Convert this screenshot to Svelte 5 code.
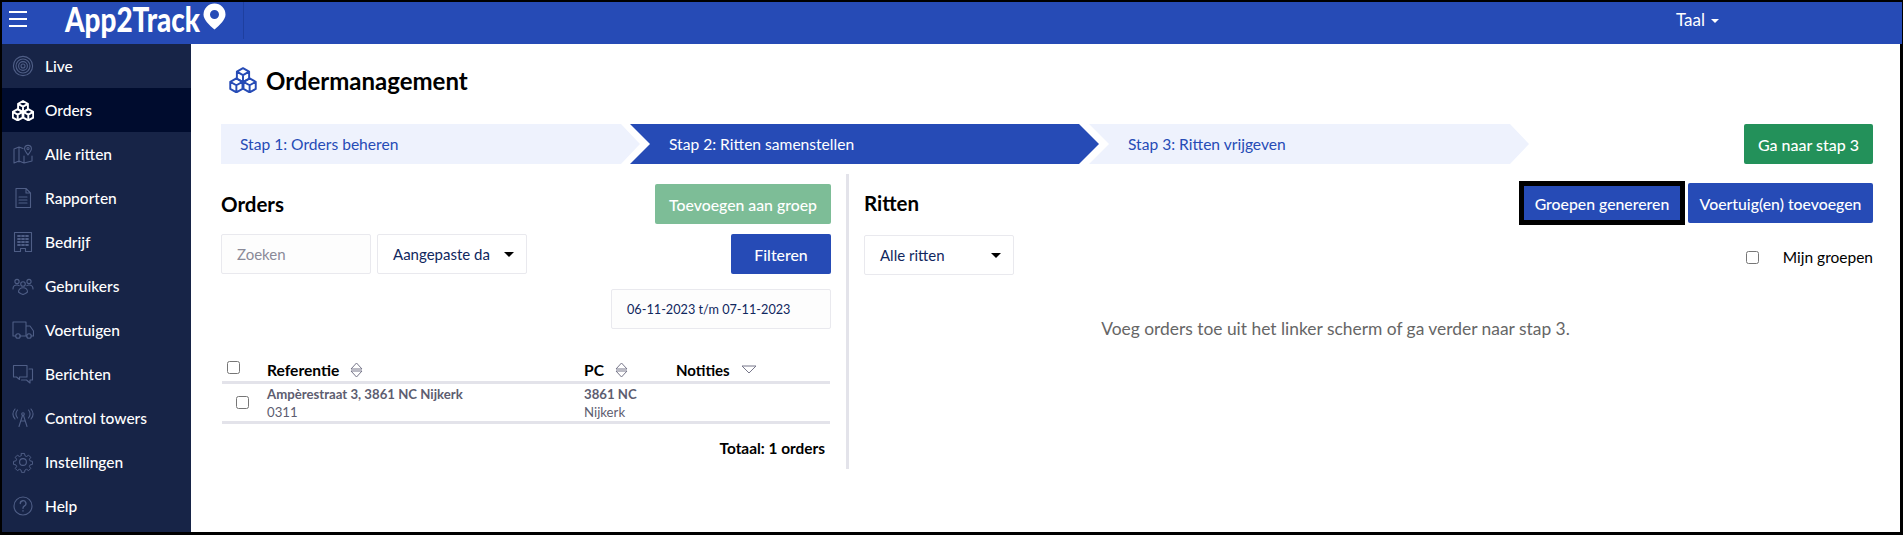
<script>
  const NAV = [
    { label: 'Live', icon: 'live' },
    { label: 'Orders', icon: 'cubes', active: true },
    { label: 'Alle ritten', icon: 'map' },
    { label: 'Rapporten', icon: 'doc' },
    { label: 'Bedrijf', icon: 'building' },
    { label: 'Gebruikers', icon: 'users' },
    { label: 'Voertuigen', icon: 'truck' },
    { label: 'Berichten', icon: 'chat' },
    { label: 'Control towers', icon: 'tower' },
    { label: 'Instellingen', icon: 'gear' },
    { label: 'Help', icon: 'help' },
  ];
</script>

{#snippet cube(x, y)}
  <path d="M{x} {y}l6 -3.4l6 3.4v7l-6 3.4l-6 -3.4zM{x} {y}l6 3.4l6 -3.4M{x + 6} {y + 3.4}v7" />
{/snippet}

{#snippet cubes(width, height, sw, cls)}
  <svg class={cls} {width} {height} viewBox="0.5 0 27 25.500" fill="none" stroke="currentColor" stroke-width={sw} stroke-linejoin="round">
    {@render cube(8, 4.5)}
    {@render cube(1.5, 14.5)}
    {@render cube(14.5, 14.5)}
  </svg>
{/snippet}

{#snippet navIcon(name)}
  {#if name === 'cubes'}
    {@render cubes(22, 21, 2.4, 'nav-icon')}
  {:else}
    <svg class="nav-icon" width="22" height="22" viewBox="0 0 22 22" fill="none" stroke="currentColor" stroke-width="1.1" stroke-linejoin="round" stroke-linecap="round">
      {#if name === 'live'}
        <circle cx="11" cy="11" r="9.6" /><circle cx="11" cy="11" r="7" /><circle cx="11" cy="11" r="4.4" /><circle cx="11" cy="11" r="2" />
      {:else if name === 'map'}
        <path d="M2 6l5-2l4 1.6M7 4v15M2 6v14l5-2l5 2l8-2v-5M12 20v-7" />
        <path d="M16 12c-2-2.6-3.4-4.4-3.4-6.2a3.4 3.4 0 0 1 6.8 0c0 1.8-1.4 3.6-3.4 6.2z" /><circle cx="16" cy="5.6" r="1.1" />
      {:else if name === 'doc'}
        <path d="M4 1.5h10l4.500 4.500v14.500h-14.500zM14 1.500v4.500h4.500M7 10h8M7 13h8M7 16h8" />
      {:else if name === 'building'}
        <path d="M2.500 1.500h17v19h-6v-3h-5v3h-6z" />
        <path d="M6 5h2M10 5h2M14 5h2M6 8h2M10 8h2M14 8h2M6 11h2M10 11h2M14 11h2M6 14h2M10 14h2M14 14h2" stroke-width="1.800" />
      {:else if name === 'users'}
        <circle cx="5" cy="6.500" r="2.100" /><circle cx="17" cy="6.500" r="2.100" /><circle cx="11" cy="9" r="2.300" />
        <path d="M1 14c0-2.500 1.500-4 4-4c1 0 1.600.2 2.200.6M21 14c0-2.500-1.500-4-4-4c-1 0-1.600.2-2.200.6M6.500 17c0-2.600 2-4.300 4.500-4.300s4.500 1.700 4.500 4.300l-2 1.500l-2.500 1l-2.500-1z" />
      {:else if name === 'truck'}
        <path d="M3.500 17h-2.500v-14h13v14h-6.500M14 7h4l3.500 5v5h-2.500M14 17h1" />
        <circle cx="6" cy="17" r="2.300" /><circle cx="17" cy="17" r="2.300" />
      {:else if name === 'chat'}
        <path d="M15 2.500h-13.500v11.500h3l3 2.500v-2.500h7.500z" />
        <path d="M17 6h3.500v11h-2.500v3l-3.500-3h-5" />
      {:else if name === 'tower'}
        <circle cx="11" cy="7" r="1.300" />
        <path d="M10.500 8.500l-3.500 11M11.500 8.500l3.500 11M9 14h4M5.500 3c-2 2.500-2 5.500 0 8M16.500 3c2 2.500 2 5.500 0 8M3 2c-2.500 3-2.500 7 0 10M19 2c2.500 3 2.500 7 0 10" />
      {:else if name === 'gear'}
        <circle cx="11" cy="11" r="3.400" />
        <path d="M9.300 1.500h3.400l.5 2.600l1.800.8l2.200-1.500l2.400 2.400l-1.500 2.200l.8 1.800l2.600.5v3.400l-2.600.5l-.8 1.800l1.500 2.200l-2.400 2.400l-2.200-1.500l-1.800.8l-.5 2.600h-3.400l-.5-2.600l-1.800-.8l-2.200 1.500l-2.400-2.400l1.500-2.200l-.8-1.800l-2.600-.5v-3.400l2.600-.5l.8-1.800l-1.500-2.200l2.400-2.400l2.200 1.500l1.800-.8z" transform="translate(1.100 1.100) scale(.9)" />
      {:else if name === 'help'}
        <circle cx="11" cy="11" r="9" />
        <path d="M8.300 8.500a2.800 2.800 0 1 1 4.200 2.400c-1 .6-1.500 1.200-1.500 2.300M11 15.800v.2" stroke-width="1.400" />
      {/if}
    </svg>
  {/if}
{/snippet}

{#snippet sortIcon()}
  <svg class="sort" width="13" height="16" viewBox="0 0 13 16" fill="none" stroke="#77778a" stroke-width="1">
    <path d="M1 7l5.500-6l5.500 6zM1 9h11l-5.500 6z" />
  </svg>
{/snippet}

<div class="frame">
  <header class="topbar">
    <button class="burger" aria-label="Menu"><span></span><span></span><span></span></button>
    <div class="logo">
      <span class="logo-text">App2Track</span>
      <svg width="23" height="27" viewBox="0 0 23 27"><path fill="#fff" fill-rule="evenodd" d="M11.500 0.500a11 11 0 0 1 11 11c0 5-5.500 10.500-11 15c-5.500-4.500-11-10-11-15a11 11 0 0 1 11-11zM11.500 7a4.500 4.500 0 1 0 0 9a4.500 4.500 0 0 0 0-9z" /></svg>
    </div>
    <div class="taal">Taal <i class="caret-white"></i></div>
  </header>

  <div class="body">
    <nav class="sidebar">
      {#each NAV as item}
        <div class="nav-item" class:active={item.active}>
          <span class="icon-box">{@render navIcon(item.icon)}</span>
          <span>{item.label}</span>
        </div>
      {/each}
    </nav>

    <main class="main">
      <div class="title">
        {@render cubes(28, 26, 1.9, 'title-icon')}
        <h1>Ordermanagement</h1>
      </div>

      <div class="wizard">
        <div class="steps">
          <div class="step first">Stap 1: Orders beheren</div>
          <div class="step second">Stap 2: Ritten samenstellen</div>
          <div class="step third">Stap 3: Ritten vrijgeven</div>
        </div>
        <button class="btn green">Ga naar stap 3</button>
      </div>

      <div class="columns">
        <section class="orders">
          <div class="row-head">
            <h2>Orders</h2>
            <button class="btn light-green">Toevoegen aan groep</button>
          </div>
          <div class="filters">
            <div class="field placeholder">Zoeken</div>
            <div class="field select">Aangepaste da <i class="caret"></i></div>
            <button class="btn blue filter-btn">Filteren</button>
          </div>
          <div class="date-wrap"><div class="field date">06-11-2023 t/m 07-11-2023</div></div>

          <div class="table">
            <div class="tr th">
              <input type="checkbox" class="head-check" />
              <div class="cell-ref">Referentie {@render sortIcon()}</div>
              <div class="cell-pc">PC {@render sortIcon()}</div>
              <div class="cell-notes">
                Notities
                <svg class="sort" width="16" height="9" viewBox="0 0 16 9" fill="none" stroke="#77778a"><path d="M1 1h14l-7 7z" /></svg>
              </div>
            </div>
            <div class="tr td">
              <input type="checkbox" class="row-check" />
              <div class="cell-ref"><b>Ampèrestraat 3, 3861 NC Nijkerk</b><span>0311</span></div>
              <div class="cell-pc"><b>3861 NC</b><span>Nijkerk</span></div>
              <div class="cell-notes"></div>
            </div>
          </div>
          <div class="total">Totaal: 1 orders</div>
        </section>

        <section class="rides">
          <div class="row-head">
            <h2>Ritten</h2>
            <div class="actions">
              <button class="btn blue focus">Groepen genereren</button>
              <button class="btn blue">Voertuig(en) toevoegen</button>
            </div>
          </div>
          <div class="rides-filter">
            <div class="field select">Alle ritten <i class="caret"></i></div>
            <label class="mine"><input type="checkbox" /><span>Mijn groepen</span></label>
          </div>
          <p class="empty">Voeg orders toe uit het linker scherm of ga verder naar stap 3.</p>
        </section>
      </div>
    </main>
  </div>
</div>

<style>
  :global(body) {
    margin: 0;
    background: #fff;
  }
  .frame {
    box-sizing: border-box;
    width: 1903px;
    height: 535px;
    border: solid #000;
    border-width: 2px 1px 3px 2px;
    display: flex;
    flex-direction: column;
    overflow: hidden;
    font-family: Lato, "Open Sans", sans-serif;
    font-size: 15px;
    color: #000;
  }
  .topbar {
    flex: 0 0 42px;
    background: #264bb6;
    display: flex;
    align-items: flex-start;
    color: #fff;
  }
  .burger {
    width: 18px;
    margin: 9px 0 0 7px;
    padding: 0;
    border: none;
    background: none;
    display: flex;
    flex-direction: column;
    gap: 5px;
  }
  .burger span {
    display: block;
    height: 2px;
    background: #fff;
  }
  .logo {
    margin-left: 38px;
    width: 178px;
    height: 37px;
    display: flex;
    align-items: flex-start;
    border-right: 1px solid #1e3f9f;
  }
  .logo svg {
    flex: none;
    margin-top: 1px;
  }
  .logo-text {
    flex: none;
    width: 138px;
    font-size: 34px;
    line-height: 33px;
    font-weight: 900;
    white-space: nowrap;
    transform: scaleX(0.82);
    transform-origin: left center;
  }
  .taal {
    margin: 9px 0 0 1432px;
    font-size: 17px;
    line-height: 18px;
    white-space: nowrap;
  }
  .caret-white {
    display: inline-block;
    margin: 0 0 3px 2px;
    border: 4px solid transparent;
    border-top-color: #fff;
    border-bottom: 0;
  }
  .body {
    flex: 1;
    display: flex;
    min-height: 0;
  }
  .sidebar {
    flex: 0 0 189px;
    background: #172447;
  }
  .nav-item {
    height: 44px;
    display: flex;
    align-items: center;
    padding-left: 10px;
    gap: 11px;
    color: #fff;
    font-size: 15.500px;
    font-weight: 500;
  }
  .icon-box {
    display: flex;
    flex: none;
    color: #4f5e86;
  }
  .nav-item.active {
    background: #000c2e;
  }
  .nav-item.active .icon-box {
    color: #fff;
  }
  .main {
    flex: 1;
    min-width: 0;
    box-sizing: border-box;
    padding: 0 27px 0 30px;
    border-right: 2px solid #000;
  }
  .title {
    display: flex;
    align-items: center;
    height: 28px;
    margin-top: 22px;
    padding-left: 8px;
    gap: 9px;
    color: #264bb6;
  }
  h1 {
    margin: 0;
    font-size: 24px;
    font-weight: 700;
    color: #000;
  }
  .wizard {
    display: flex;
    justify-content: space-between;
    margin-top: 30px;
  }
  .steps {
    display: flex;
    font-size: 15.600px;
  }
  .step {
    height: 40px;
    box-sizing: border-box;
    display: flex;
    align-items: center;
    background: #eef2fd;
    color: #264bb6;
    white-space: nowrap;
  }
  .first {
    width: 419px;
    padding-left: 19px;
    clip-path: polygon(0 0, 400px 0, 100% 50%, 400px 100%, 0 100%);
  }
  .second {
    width: 469px;
    margin-left: -10px;
    padding-left: 39px;
    background: #264bb6;
    color: #fff;
    clip-path: polygon(0 0, 449px 0, 100% 50%, 449px 100%, 0 100%, 20px 50%);
  }
  .third {
    width: 440px;
    margin-left: -10px;
    padding-left: 39px;
    clip-path: polygon(0 0, 421px 0, 100% 50%, 421px 100%, 0 100%, 20px 50%);
  }
  .btn {
    height: 40px;
    box-sizing: border-box;
    border: none;
    border-radius: 2px;
    color: #fff;
    font: inherit;
    font-size: 15.800px;
    font-weight: 500;
    padding: 0;
    white-space: nowrap;
  }
  .green {
    width: 129px;
    background: #23915a;
    font-size: 16px;
  }
  .light-green {
    width: 176px;
    background: #7dbd97;
  }
  .blue {
    background: #264bb6;
  }
  .columns {
    display: flex;
    margin-top: 10px;
  }
  .orders {
    flex: 0 0 625px;
    box-sizing: border-box;
    width: 625px;
    height: 295px;
    padding: 10px 15px 0 0;
    border-right: 0;
  }
  .row-head {
    display: flex;
    justify-content: space-between;
    align-items: center;
  }
  h2 {
    margin: 0;
    font-size: 20.500px;
    font-weight: 700;
  }
  .filters {
    display: flex;
    gap: 6px;
    margin-top: 10px;
  }
  .field {
    box-sizing: border-box;
    height: 40px;
    width: 150px;
    display: flex;
    align-items: center;
    padding: 0 15px;
    border: 1px solid #e9e9ee;
    border-radius: 2px;
    color: #10275e;
    white-space: nowrap;
  }
  .placeholder {
    color: #8a8a98;
    background: #fdfdfd;
  }
  .select {
    justify-content: space-between;
    padding-right: 12px;
  }
  .caret {
    flex: none;
    border: 5px solid transparent;
    border-top-color: #000;
    border-bottom: 0;
  }
  .filter-btn {
    width: 100px;
    margin-left: auto;
  }
  .date-wrap {
    display: flex;
    justify-content: flex-end;
    margin-top: 15px;
  }
  .date {
    width: 220px;
    background: #fdfdfd;
    font-size: 12.700px;
  }
  .table {
    margin-top: 29px;
    width: 608px;
    margin-left: 1px;
  }
  .tr {
    display: grid;
    grid-template-columns: 45px 317px 92px 1fr;
    position: relative;
  }
  .th {
    height: 23px;
    border-bottom: 3px solid #e3e3ea;
    font-weight: 700;
    align-items: center;
    font-size: 15.600px;
    padding-top: 0;
  }
  .th > div {
    display: flex;
    align-items: center;
    gap: 11px;
  }
  .cell-notes {
    font-size: 15px;
  }
  .sort {
    flex: none;
  }
  .head-check {
    margin: -5px 0 0 5px;
  }
  .row-check {
    margin: 12px 0 0 14px;
  }
  input[type="checkbox"] {
    width: 13px;
    height: 13px;
  }
  .td {
    height: 37px;
    border-bottom: 3px solid #e3e3ea;
    box-sizing: content-box;
    color: #5d5d70;
    font-size: 13.200px;
  }
  .td > div {
    display: flex;
    flex-direction: column;
    justify-content: space-between;
    padding: 2px 0 1px;
    line-height: 16px;
  }
  .total {
    margin-top: 15px;
    width: 604px;
    text-align: right;
    font-size: 15.400px;
    font-weight: 700;
  }
  .rides {
    flex: 1;
    border-left: 3px solid #e3e3ea;
    padding: 7px 0 0 15px;
    height: 295px;
    box-sizing: border-box;
    min-width: 0;
  }
  .actions {
    display: flex;
    align-items: center;
    gap: 3px;
  }
  .actions .btn {
    width: 185px;
  }
  .actions .focus {
    width: 166px;
    height: 44px;
    border: 5px solid #000;
    border-radius: 0;
  }
  .rides-filter {
    display: flex;
    justify-content: space-between;
    align-items: flex-start;
    margin-top: 10px;
  }
  .mine {
    display: flex;
    align-items: center;
    gap: 24px;
    margin-top: 13px;
    font-size: 15.500px;
  }
  .mine input {
    margin: 0;
  }
  .empty {
    margin: 43px 0 0 0;
    padding-right: 66px;
    text-align: center;
    font-size: 17.400px;
    color: #666;
  }
</style>
